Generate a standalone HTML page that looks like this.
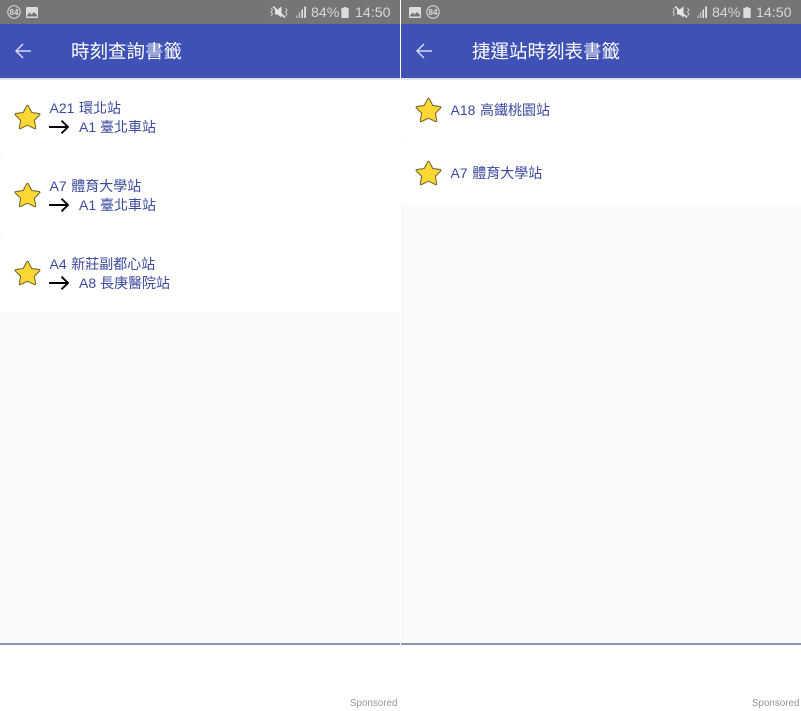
<!DOCTYPE html>
<html>
<head>
<meta charset="utf-8">
<style>
html,body{margin:0;padding:0;background:#fff}
body{width:801px;height:711px;position:relative;overflow:hidden;font-family:"Liberation Sans","Noto Sans CJK TC",sans-serif}
.a{position:absolute}
.panel{position:absolute;top:0;width:400px;height:711px;background:#fafafa;overflow:hidden}
.status{position:absolute;left:0;top:0;width:400px;height:24px;background:#757575}
.bar{position:absolute;left:0;top:24px;width:400px;height:54px;background:#3f51b5}
.shadow{position:absolute;left:0;top:78px;width:400px;height:3px;background:linear-gradient(#d5d7e0,#f4f4f6)}
.title{position:absolute;top:38px;font-size:18.5px;line-height:27px;color:#fff;white-space:nowrap}
.list{position:absolute;left:0;top:80px;width:400px;background:#fff}
.t{position:absolute;font-size:14px;line-height:20px;color:#3a4a9f;white-space:nowrap;word-spacing:.7px}
.ad{position:absolute;left:0;top:643px;width:400px;height:68px;background:#fff;border-top:2px solid #8e96b8;box-sizing:border-box}
.sp{position:absolute;top:696.5px;font-size:9.8px;line-height:13px;color:#969696;white-space:nowrap}
.st{position:absolute;top:4px;font-size:14.2px;line-height:18px;color:#d8d8d8;white-space:nowrap}
.n{position:absolute;width:14px;text-align:center;font-size:8px;font-weight:bold;line-height:14px;color:#dcdcdc}
.sep{position:absolute;left:0;width:2px;height:1px;background:#efefef}
svg{position:absolute;overflow:visible}
</style>
</head>
<body>
<svg width="0" height="0" style="position:absolute">
<defs>
<symbol id="star" viewBox="0 0 26 26"><path d="M12.2 1.8 Q13 .6 13.8 1.8 L17.1 8.2 L24.2 9.2 Q25.5 9.6 24.7 10.6 L19.6 15.7 L20.9 22.8 Q21 24.2 19.8 23.7 L13 20.4 L6.2 23.7 Q5 24.2 5.1 22.8 L6.4 15.7 L1.3 10.6 Q.5 9.6 1.8 9.2 L8.9 8.2 Z" fill="#fdd835" stroke="#6f6330" stroke-width="1" stroke-linejoin="round"/></symbol>
<symbol id="arrow" viewBox="0 0 20 14"><path d="M0 7 H18.5 M12.5 .7 L19 7 L12.5 13.3" fill="none" stroke="#000" stroke-width="1.9"/></symbol>
<symbol id="back" viewBox="0 0 16 16"><path d="M16 8 H1.5 M8 1 L1 8 L8 15" fill="none" stroke="#d5d9f2" stroke-width="1.5"/></symbol>
<symbol id="pic" viewBox="0 0 12 11"><rect x="0" y="0" width="12" height="11" rx="1" fill="#dcdcdc"/><path d="M1 8.5 L3.5 5.5 L5.5 7.5 L8 5 L11 8 V9.5 H1Z" fill="#757575"/></symbol>
<symbol id="badge" viewBox="0 0 14 14"><circle cx="7" cy="7" r="6.2" fill="none" stroke="#dcdcdc" stroke-width="1"/></symbol>
<symbol id="mute" viewBox="0 0 18 12"><path d="M5 3.5 H7.5 L11.5 .5 V11.5 L7.5 8.5 H5Z" fill="#e4e4e4"/><path d="M3 .5 L15 11.5" stroke="#e4e4e4" stroke-width="1.6"/><path d="M1 2 L2.5 4 L1 6 L2.5 8 L1 10 M15.5 2 L17 4 L15.5 6 L17 8 L15.5 10" fill="none" stroke="#d0d0d0" stroke-width="1"/></symbol>
<symbol id="sig" viewBox="0 0 12 12"><path d="M11 0 V12 H9.2 V1Z M8 3 V12 H6.4 V4Z" fill="#e0e0e0"/><path d="M5.2 6 V12 H3.8 V7Z M2.6 9 V12 H1.4 V10Z" fill="#c4c4c4"/></symbol>
<symbol id="bat" viewBox="0 0 8 12"><path d="M2.5 0 H5.5 V1 H8 V12 H0 V1 H2.5Z" fill="#dcdcdc"/></symbol>
</defs>
</svg>

<div class="panel" style="left:0">
  <div class="status"></div>
  <svg style="left:7px;top:5px" width="14" height="14"><use href="#badge"/></svg>
  <div class="n" style="left:7px;top:5.5px">84</div>
  <svg style="left:26px;top:7px" width="12" height="11"><use href="#pic"/></svg>
  <svg style="left:270px;top:6px" width="18" height="12"><use href="#mute"/></svg>
  <svg style="left:295px;top:6px" width="12" height="12"><use href="#sig"/></svg>
  <div class="st" style="left:311px">84%</div>
  <svg style="left:341px;top:7px" width="8" height="11"><use href="#bat"/></svg>
  <div class="st" style="left:355px">14:50</div>
  <div class="bar"></div>
  <svg style="left:15px;top:43px" width="16" height="16"><use href="#back"/></svg>
  <div class="title" style="left:71px">時刻查詢書籤</div>
  <div class="shadow"></div>
  <div class="list" style="height:232px"></div>
  <div class="sep" style="top:155px"></div>
  <div class="sep" style="top:234px"></div>
  <svg style="left:14px;top:104px" width="27" height="27"><use href="#star"/></svg>
  <div class="t" style="left:49.5px;top:98px">A21 環北站</div>
  <svg style="left:49px;top:120px" width="20" height="14"><use href="#arrow"/></svg>
  <div class="t" style="left:79px;top:117px;word-spacing:0">A1 臺北車站</div>
  <svg style="left:14px;top:182px" width="27" height="27"><use href="#star"/></svg>
  <div class="t" style="left:49.5px;top:176px">A7 體育大學站</div>
  <svg style="left:49px;top:198px" width="20" height="14"><use href="#arrow"/></svg>
  <div class="t" style="left:79px;top:195px;word-spacing:0">A1 臺北車站</div>
  <svg style="left:14px;top:260px" width="27" height="27"><use href="#star"/></svg>
  <div class="t" style="left:49.5px;top:254px">A4 新莊副都心站</div>
  <svg style="left:49px;top:276px" width="20" height="14"><use href="#arrow"/></svg>
  <div class="t" style="left:79px;top:273px;word-spacing:0">A8 長庚醫院站</div>
  <div class="ad"></div>
  <div class="sp" style="left:350px">Sponsored</div>
</div>

<div class="panel" style="left:401px">
  <div class="status"></div>
  <svg style="left:8px;top:7px" width="12" height="11"><use href="#pic"/></svg>
  <svg style="left:25px;top:5px" width="14" height="14"><use href="#badge"/></svg>
  <div class="n" style="left:25px;top:5.5px">84</div>
  <svg style="left:271px;top:6px" width="18" height="12"><use href="#mute"/></svg>
  <svg style="left:295px;top:6px" width="12" height="12"><use href="#sig"/></svg>
  <div class="st" style="left:311px">84%</div>
  <svg style="left:342px;top:7px" width="8" height="11"><use href="#bat"/></svg>
  <div class="st" style="left:355px">14:50</div>
  <div class="bar"></div>
  <svg style="left:15px;top:43px" width="16" height="16"><use href="#back"/></svg>
  <div class="title" style="left:71px">捷運站時刻表書籤</div>
  <div class="shadow"></div>
  <div class="list" style="height:125px"></div>
  <div class="sep" style="top:141px"></div>
  <svg style="left:14px;top:97px" width="27" height="27"><use href="#star"/></svg>
  <div class="t" style="left:49.5px;top:100px">A18 高鐵桃園站</div>
  <svg style="left:14px;top:160px" width="27" height="27"><use href="#star"/></svg>
  <div class="t" style="left:49.5px;top:163px">A7 體育大學站</div>
  <div class="ad"></div>
  <div class="sp" style="left:351px">Sponsored</div>
</div>
</body>
</html>
